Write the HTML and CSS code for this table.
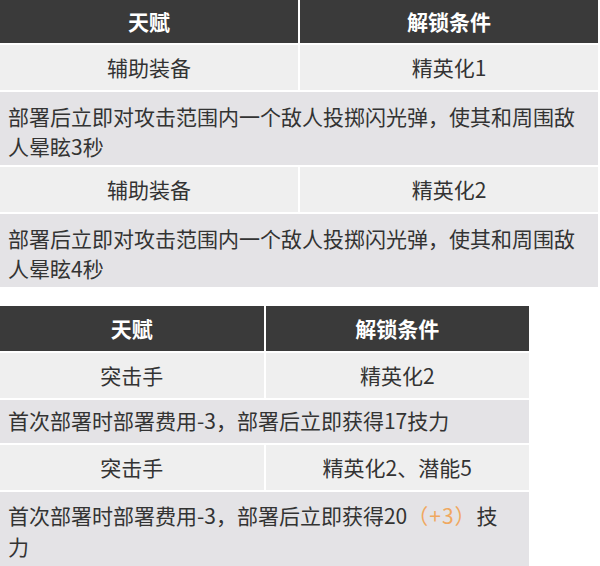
FILE: index.html
```html
<!DOCTYPE html>
<html lang="zh">
<head>
<meta charset="utf-8">
<link rel="stylesheet" href="styles.css">
</head>
<body>
<div class="tbl tbl-a">
  <div class="th">天赋</div>
  <div class="th">解锁条件</div>
  <div class="td">辅助装备</div>
  <div class="td">精英化1</div>
  <div class="desc">部署后立即对攻击范围内一个敌人投掷闪光弹，使其和周围敌人晕眩3秒</div>
  <div class="td">辅助装备</div>
  <div class="td">精英化2</div>
  <div class="desc">部署后立即对攻击范围内一个敌人投掷闪光弹，使其和周围敌人晕眩4秒</div>
</div>
<div class="tbl tbl-b">
  <div class="th">天赋</div>
  <div class="th">解锁条件</div>
  <div class="td">突击手</div>
  <div class="td">精英化2</div>
  <div class="desc single">首次部署时部署费用-3，部署后立即获得17技力</div>
  <div class="td">突击手</div>
  <div class="td">精英化2、潜能5</div>
  <div class="desc">首次部署时部署费用-3，部署后立即获得20<span class="bonus">（+3）</span>技力</div>
</div>
</body>
</html>
```
FILE: styles.css
```css
html, body {
  margin: 0;
  padding: 0;
  background: #ffffff;
}
body {
  font-family: "Noto Sans CJK SC", "Noto Sans", sans-serif;
  color: #333333;
  font-size: 21px;
}
.tbl {
  display: grid;
  grid-template-columns: 1fr 1fr;
  gap: 2px;
}
.tbl-a {
  width: 598px;
}
.tbl-b {
  width: 529px;
  margin-top: 19px;
}
.th {
  background: #3a3a3a;
  color: #ffffff;
  font-weight: bold;
  text-align: center;
  height: 43px;
  line-height: 43px;
}
.tbl-b .th {
  height: 45px;
  line-height: 45px;
}
.td {
  background: #efefef;
  text-align: center;
  height: 45px;
  line-height: 45px;
}
.desc {
  grid-column: 1 / span 2;
  background: #e4e3e6;
  padding: 9px 8px 4px 8px;
  line-height: 30px;
}
.tbl-b .desc {
  line-height: 31px;
  padding: 8px 18px 6px 8px;
}
.tbl-b .desc.single {
  padding: 5px 18px 7px 8px;
}
.bonus {
  color: #f0a860;
  letter-spacing: 1px;
}
```
